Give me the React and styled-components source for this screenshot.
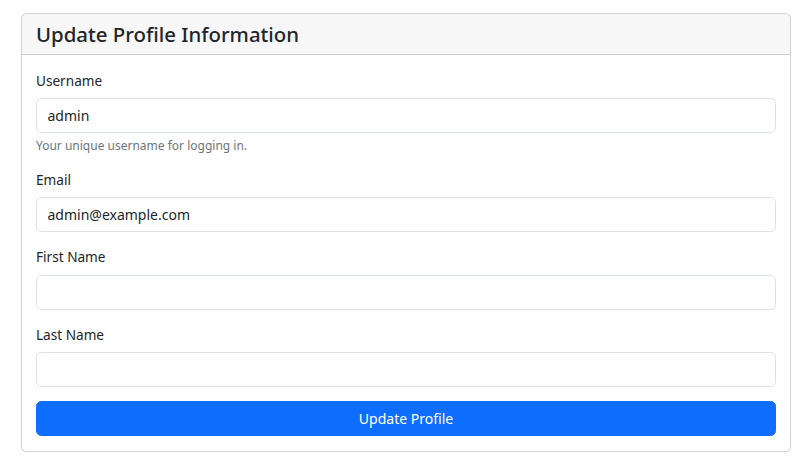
import React from 'react';
import styled, { createGlobalStyle } from 'styled-components';

const GlobalStyle = createGlobalStyle`
  *, *::before, *::after {
    box-sizing: border-box;
  }

  html {
    font-size: 14px;
  }

  body {
    margin: 0;
    padding: 13px 21px;
    background: #ffffff;
    color: #212529;
    font-family: "Noto Sans", "Open Sans", sans-serif;
    font-size: 14px;
    line-height: 1.5;
  }
`;

const Card = styled.div`
  border: 1px solid rgba(0, 0, 0, 0.175);
  border-radius: 5.25px;
  background: #ffffff;
  overflow: hidden;
`;

const CardHeader = styled.div`
  padding: 7px 14px;
  background: rgba(0, 0, 0, 0.03);
  border-bottom: 1px solid rgba(0, 0, 0, 0.175);
`;

const Title = styled.h4`
  margin: 0;
  font-size: 20.4px;
  font-weight: 500;
  line-height: 26px;
  color: #212529;
`;

const CardBody = styled.form`
  padding: 14.5px 14px;
`;

const Field = styled.div`
  margin-bottom: 14px;
`;

const Label = styled.label`
  display: block;
  margin-bottom: 7.5px;
  font-size: 13.6px;
  line-height: 21px;
`;

const Input = styled.input`
  display: block;
  width: 100%;
  height: 35px;
  padding: 5.25px 10.5px;
  font-family: inherit;
  font-size: 14px;
  line-height: 21px;
  color: #212529;
  background: #ffffff;
  border: 1px solid #dee2e6;
  border-radius: 5.25px;
  outline: none;
`;

const Help = styled.div`
  margin-top: 3.5px;
  font-size: 12px;
  line-height: 18.4px;
  color: #6c757d;
`;

const SubmitButton = styled.button`
  display: block;
  width: 100%;
  height: 35px;
  padding: 5.25px 10.5px;
  font-family: inherit;
  font-size: 14px;
  line-height: 21px;
  color: #ffffff;
  background: #0d6efd;
  border: 1px solid #0d6efd;
  border-radius: 5.25px;
  cursor: pointer;
`;

const fields = [
  { id: 'username', label: 'Username', type: 'text', value: 'admin', help: 'Your unique username for logging in.' },
  { id: 'email', label: 'Email', type: 'email', value: 'admin@example.com' },
  { id: 'first_name', label: 'First Name', type: 'text', value: '' },
  { id: 'last_name', label: 'Last Name', type: 'text', value: '' },
];

export default function App() {
  return (
    <>
      <GlobalStyle />
      <Card>
        <CardHeader>
          <Title>Update Profile Information</Title>
        </CardHeader>
        <CardBody onSubmit={(e) => e.preventDefault()}>
          {fields.map((f) => (
            <Field key={f.id}>
              <Label htmlFor={f.id}>{f.label}</Label>
              <Input id={f.id} name={f.id} type={f.type} defaultValue={f.value} />
              {f.help && <Help>{f.help}</Help>}
            </Field>
          ))}
          <SubmitButton type="submit">Update Profile</SubmitButton>
        </CardBody>
      </Card>
    </>
  );
}
